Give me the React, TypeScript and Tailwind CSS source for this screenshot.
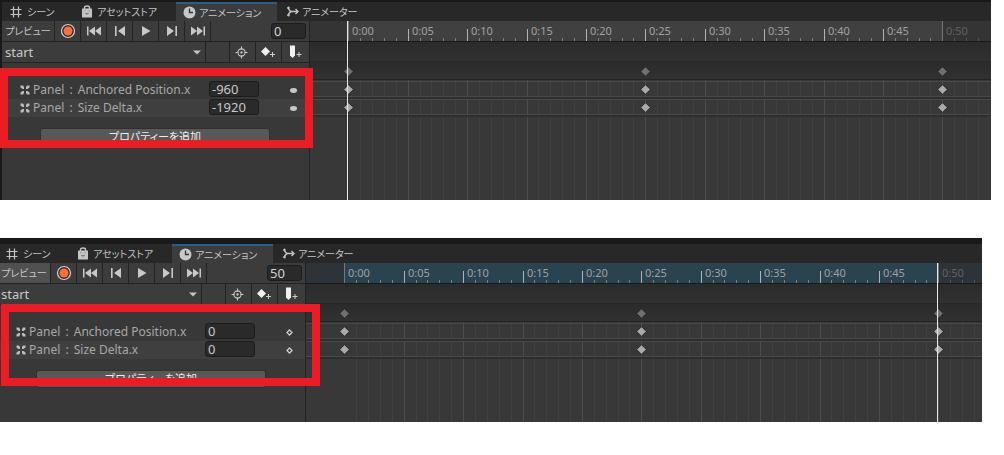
import React from 'react';

const FRAME_WIDTH = 11.88;
const TIMELINE_START = 38.3;
const LAST_FRAME = 50;
const KEYFRAMES = [0, 25, 50];
const FRAMES = Array.from({ length: 54 }, (_, i) => i);

const frameX = (frame: number) => Math.round(TIMELINE_START + frame * FRAME_WIDTH);

const formatFrame = (frame: number) => `0:${String(frame).padStart(2, '0')}`;

interface Property {
  target: string;
  name: string;
  value: string;
}

interface AnimationWindowProps {
  id: string;
  frame: number;
  previewing?: boolean;
  properties: Property[];
  bottomClass: string;
}

const GridIcon = () => (
  <svg width="12" height="12" viewBox="0 0 12 12" stroke="#c4c4c4" strokeWidth="1.2" fill="none">
    <path d="M3.5 0.5V11.5M8.5 0.5V11.5M0.5 3.5H11.5M0.5 8.5H11.5" />
  </svg>
);

const BagIcon = () => (
  <svg width="12" height="13" viewBox="0 0 12 13">
    <path d="M3.5 4V2.5Q3.5 1 6 1T8.5 2.5V4" fill="none" stroke="#c4c4c4" strokeWidth="1.4" />
    <rect x="1" y="3.5" width="10" height="9" rx="0.5" fill="#c4c4c4" />
    <path d="M3.8 5.5V6.2M8.2 5.5V6.2M4.5 8.5Q6 9.5 7.5 8.5" fill="none" stroke="#555" strokeWidth="1" />
  </svg>
);

const ClockIcon = () => (
  <svg width="13" height="13" viewBox="0 0 13 13">
    <circle cx="6.5" cy="6.5" r="6" fill="#c8c8c8" />
    <path d="M6.5 2.5V6.5H10" fill="none" stroke="#333" strokeWidth="1.3" />
  </svg>
);

const AnimatorIcon = () => (
  <svg width="12" height="11" viewBox="0 0 12 11" fill="none" stroke="#c4c4c4" strokeWidth="1.4">
    <path d="M1 1.5Q2.5 5.5 5 5.5H11M1 9.5Q2.5 5.5 5 5.5M8.5 3L11 5.5L8.5 8" />
    <circle cx="1.5" cy="1.8" r="0.6" />
    <circle cx="1.5" cy="9.2" r="0.6" />
  </svg>
);

const RecordIcon = () => (
  <svg width="16" height="16" viewBox="0 0 16 16">
    <circle cx="8" cy="8" r="6.5" fill="#3a2a24" stroke="#d2d2d2" strokeWidth="1.2" />
    <circle cx="8" cy="8" r="4.5" fill="#ff6e40" />
  </svg>
);

const FirstIcon = () => (
  <svg width="16" height="10" viewBox="0 0 16 10" fill="#c8c8c8">
    <path d="M1 0.5H2.5V9.5H1ZM9 0.5V9.5L3 5ZM15 0.5V9.5L9 5Z" />
  </svg>
);

const PrevIcon = () => (
  <svg width="12" height="12" viewBox="0 0 12 12" fill="#c8c8c8">
    <path d="M1 1H2.6V11H1ZM11 1V11L4 6Z" />
  </svg>
);

const PlayIcon = () => (
  <svg width="12" height="12" viewBox="0 0 12 12" fill="#c8c8c8">
    <path d="M2 1L10.5 6L2 11Z" />
  </svg>
);

const NextIcon = () => (
  <svg width="12" height="12" viewBox="0 0 12 12" fill="#c8c8c8">
    <path d="M1 1V11L8 6ZM9.4 1H11V11H9.4Z" />
  </svg>
);

const LastIcon = () => (
  <svg width="16" height="10" viewBox="0 0 16 10" fill="#c8c8c8">
    <path d="M1 0.5V9.5L7 5ZM7 0.5V9.5L13 5ZM13.5 0.5H15V9.5H13.5Z" />
  </svg>
);

const TargetIcon = () => (
  <svg width="13" height="13" viewBox="0 0 13 13" fill="none" stroke="#c8c8c8" strokeWidth="1.1">
    <circle cx="6.5" cy="6.5" r="3.6" />
    <path d="M6.5 0.5V3.5M6.5 9.5V12.5M0.5 6.5H3.5M9.5 6.5H12.5" />
    <circle cx="6.5" cy="6.5" r="0.6" fill="#c8c8c8" />
  </svg>
);

const AddKeyIcon = () => (
  <svg width="16" height="14" viewBox="0 0 16 14">
    <path d="M5.5 2L10 6.5L5.5 11L1 6.5Z" fill="#f0f0f0" />
    <path d="M12.5 7V12M10 9.5H15" stroke="#d0d0d0" strokeWidth="1" />
  </svg>
);

const AddEventIcon = () => (
  <svg width="16" height="14" viewBox="0 0 16 14">
    <path d="M3 0.5H8V10.5L5.5 13L3 10.5Z" fill="#f0f0f0" />
    <path d="M12 7V12M9.5 9.5H14.5" stroke="#d0d0d0" strokeWidth="1" />
  </svg>
);

const RectIcon = () => (
  <svg width="10" height="10" viewBox="0 0 10 10" fill="#bcbcbc">
    <path d="M0.500 0.500H3L4 2V4H2.500L0.500 2.500ZM9.500 0.500H7L6 2V4H7.500L9.500 2.500ZM0.500 9.500H3L4 8V6H2.500L0.500 7.500ZM9.500 9.500H7L6 8V6H7.500L9.500 7.500Z" />
  </svg>
);

const CurveIcon = ({ onKey }: { onKey: boolean }) => (
  <svg width="9" height="9" viewBox="0 0 9 9">
    {onKey ? (
      <path d="M4.5 2L7 4.5L4.5 7L2 4.5Z" fill="#333" stroke="#d0d0d0" strokeWidth="1.3" />
    ) : (
      <ellipse cx="4.5" cy="4.5" rx="3.5" ry="2.4" fill="#c8c8c8" />
    )}
  </svg>
);

const Keyframe = ({ fill }: { fill: string }) => (
  <svg width="11" height="11" viewBox="0 0 11 11" className="block">
    <path d="M5.5 0.7L10.3 5.5L5.5 10.3L0.7 5.5Z" fill={fill} stroke="#202020" strokeWidth="0.8" />
  </svg>
);

const TabBar = () => (
  <div
    role="tablist"
    className="flex h-[19px] bg-[#282828] text-[10px] leading-4 text-[#c4c4c4] [font-feature-settings:'palt']"
  >
    <button role="tab" className="flex w-[72px] items-center gap-[5px] pl-2 whitespace-nowrap">
      <GridIcon />
      シーン
    </button>
    <button role="tab" className="flex w-[102px] items-center gap-1 pl-[7px] whitespace-nowrap">
      <BagIcon />
      アセットストア
    </button>
    <button
      role="tab"
      aria-selected="true"
      className="flex w-[101px] items-center gap-[3px] border-t-2 border-[#2c5d87] bg-[#3c3c3c] pl-[7px] whitespace-nowrap"
    >
      <ClockIcon />
      アニメーション
    </button>
    <button role="tab" className="flex items-center gap-[3px] pl-[10px] whitespace-nowrap">
      <AnimatorIcon />
      アニメーター
    </button>
  </div>
);

const TRANSPORT = [
  { label: '録画', icon: <RecordIcon /> },
  { label: '最初へ', icon: <FirstIcon /> },
  { label: '前のキー', icon: <PrevIcon /> },
  { label: '再生', icon: <PlayIcon /> },
  { label: '次のキー', icon: <NextIcon /> },
  { label: '最後へ', icon: <LastIcon /> },
];

const CLIP_ACTIONS = [
  { label: '選択でフィルター', icon: <TargetIcon /> },
  { label: 'キーフレームを追加', icon: <AddKeyIcon /> },
  { label: 'イベントを追加', icon: <AddEventIcon /> },
];

const Sidebar = ({ id, frame, previewing, properties, bottomClass }: AnimationWindowProps) => (
  <div className={`w-[308px] shrink-0 border-r border-[#222] bg-[#383838] ${bottomClass}`}>
    {/* Transport controls */}
    <div className="flex h-[21px] border-b border-[#232323] bg-[#3c3c3c]">
      <button
        className={`w-[53px] border-r border-[#232323] text-center text-[10px] leading-5 whitespace-nowrap text-[#c4c4c4] [font-feature-settings:'palt'] ${previewing ? 'bg-[#505050]' : ''}`}
      >
        プレビュー
      </button>
      {TRANSPORT.map((item) => (
        <button
          key={item.label}
          aria-label={item.label}
          className="flex w-[26px] items-center justify-center border-r border-[#232323]"
        >
          {item.icon}
        </button>
      ))}
      <input
        aria-label="フレーム"
        defaultValue={frame}
        className="mt-0.5 mr-[3px] ml-auto h-4 w-[35px] rounded-[3px] border border-[#1c1c1c] bg-[#2a2a2a] px-0.5 text-[13px] leading-4 text-[#d2d2d2]"
      />
    </div>

    {/* Clip selection */}
    <div className="flex h-[21px] border-b border-[#232323] bg-[#3c3c3c]">
      <div className="relative flex-1 border-r border-[#232323]">
        <select
          aria-label="クリップ"
          className="block h-5 w-full appearance-none pl-[3px] text-[13px] leading-5 text-[#c8c8c8]"
        >
          <option>start</option>
        </select>
        <svg width="8" height="5" viewBox="0 0 8 5" className="pointer-events-none absolute top-2 right-1">
          <path d="M0 0.5H8L4 4.5Z" fill="#c4c4c4" />
        </svg>
      </div>
      <div className="w-6 border-r border-[#232323]" />
      {CLIP_ACTIONS.map((item) => (
        <button
          key={item.label}
          aria-label={item.label}
          className="flex w-[26px] items-center justify-center border-r border-[#232323] pr-0.5 last:w-[27px] last:border-r-0"
        >
          {item.icon}
        </button>
      ))}
    </div>

    {/* Animated properties */}
    <div className="pt-[18px]">
      {properties.map((property, index) => (
        <div key={property.name} className={`flex h-[18px] items-center pl-[18px] ${index % 2 ? 'bg-[#3f3f3f]' : ''}`}>
          <RectIcon />
          <label
            htmlFor={`${id}-${index}`}
            className="ml-[3px] w-[176px] text-[12px] leading-4 whitespace-nowrap text-[#a8a8a8]"
          >
            {property.target} <span className="mx-0.5">:</span> {property.name}
          </label>
          <input
            id={`${id}-${index}`}
            defaultValue={property.value}
            className="mb-0.5 h-4 w-[50px] rounded-[3px] border border-[#1c1c1c] bg-[#2a2a2a] px-0.5 text-[13px] leading-4 text-[#c8c8c8]"
          />
          <button aria-label="カーブ" className="ml-[30px] flex">
            <CurveIcon onKey={frame > 0} />
          </button>
        </div>
      ))}
    </div>
    <button className="mt-[11px] ml-[38px] block h-[18px] w-[230px] rounded-[3px] border border-[#303030] bg-[#585858] text-center text-[11px] leading-4 text-[#eee] [font-feature-settings:'palt']">
      プロパティーを追加
    </button>
  </div>
);

const KeyRow = ({ fill }: { fill: string }) => (
  <>
    {KEYFRAMES.map((key) => (
      <div key={key} className="absolute top-1 -ml-[5px]" style={{ left: frameX(key) }}>
        <Keyframe fill={fill} />
      </div>
    ))}
  </>
);

const Timeline = ({ frame, previewing, properties }: AnimationWindowProps) => (
  <div className="relative flex min-w-0 flex-1 flex-col overflow-hidden bg-[#383838]">
    {/* Ruler */}
    <div className={`relative h-[21px] border-b border-[#191919] ${previewing ? 'bg-[#2c3439]' : 'bg-[#343434]'}`}>
      <div
        className={`absolute inset-y-0 ${previewing ? 'bg-[#294350]' : 'bg-[#404040]'}`}
        style={{ left: frameX(0), width: frameX(LAST_FRAME) - frameX(0) }}
      />
      {FRAMES.map((f) => {
        const edge = f === 0 || f === LAST_FRAME;
        const major = f % 5 === 0;
        return (
          <div
            key={f}
            className={`absolute bottom-0 w-px ${edge ? 'h-5 bg-[#777]' : major ? 'h-3 bg-[#b4b4b4]' : f > LAST_FRAME ? 'h-[3px] bg-[#555]' : 'h-[3px] bg-[#808080]'}`}
            style={{ left: frameX(f) }}
          />
        );
      })}
      {FRAMES.filter((f) => f % 5 === 0).map((f) => (
        <span
          key={f}
          className={`absolute top-0.5 pl-1 text-[11px] leading-4 ${f === LAST_FRAME ? 'text-[#606060]' : 'text-[#a0a0a0]'}`}
          style={{ left: frameX(f) }}
        >
          {formatFrame(f)}
        </span>
      ))}
    </div>

    {/* Event track and key summary */}
    <div className="h-5 border-b border-[#292929] bg-linear-to-b from-[#2b2b2b] to-[#313131]" />
    <div className="relative h-[18px] border-b border-[#242424] bg-linear-to-b from-[#2b2b2b] to-[#313131]">
      <KeyRow fill="#707070" />
    </div>

    <div className="relative flex-1 pt-px">
      {FRAMES.slice(1).map((f) => (
        <div
          key={f}
          className={`absolute inset-y-0 w-px ${f % 5 === 0 ? 'bg-[#4c4c4c]' : 'bg-[#404040]'}`}
          style={{ left: frameX(f) }}
        />
      ))}
      {properties.map((property) => (
        <div key={property.name} className="relative h-[18px] border-b-2 border-[#2e2e2e]">
          <div className="h-4 border-y border-[#494949]" />
          <div className="absolute inset-x-0 -top-px">
            <KeyRow fill="#aaaaaa" />
          </div>
        </div>
      ))}
    </div>

    {/* Playhead */}
    <div className="absolute inset-y-0 -ml-px w-px bg-[#e8e8e8]" style={{ left: frameX(frame) }} />
  </div>
);

const AnimationWindow: React.FC<AnimationWindowProps> = (props) => (
  <div className="border-l-2 border-[#191919]">
    <TabBar />
    <div className="flex">
      <Sidebar {...props} />
      <Timeline {...props} />
    </div>
  </div>
);

const App: React.FC = () => {
  return (
    <main className="flex flex-col gap-[38px] bg-white font-['Noto_Sans','Noto_Sans_CJK_JP',sans-serif]">
      <section className="relative mr-[13px] overflow-hidden border-t-2 border-[#191919]">
        <AnimationWindow
          id="first"
          frame={0}
          bottomClass="pb-[54px]"
          properties={[
            { target: 'Panel', name: 'Anchored Position.x', value: '-960' },
            { target: 'Panel', name: 'Size Delta.x', value: '-1920' },
          ]}
        />
        <div className="pointer-events-none absolute top-[66px] left-0 h-20 w-[313px] border-8 border-[#ed1c24]" />
      </section>

      <section className="relative mr-[22px] overflow-hidden border-t-[6px] border-[#191919]">
        <div className="-ml-1">
          <AnimationWindow
            id="second"
            frame={50}
            previewing
            bottomClass="pb-[34px]"
            properties={[
              { target: 'Panel', name: 'Anchored Position.x', value: '0' },
              { target: 'Panel', name: 'Size Delta.x', value: '0' },
            ]}
          />
        </div>
        <div className="pointer-events-none absolute top-[60px] left-px h-[82px] w-[319px] border-8 border-[#ed1c24]" />
      </section>
    </main>
  );
};

export default App;
